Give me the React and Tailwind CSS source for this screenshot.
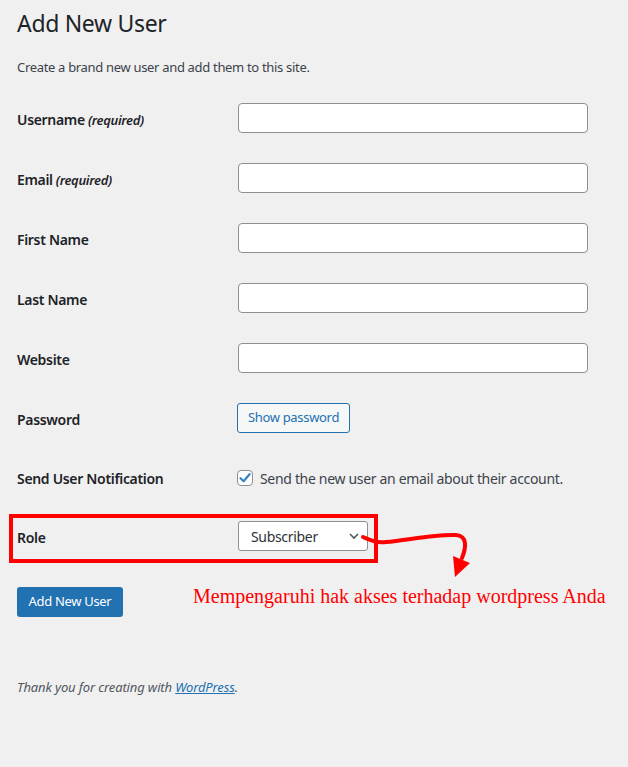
import React from "react";

const font = { fontFamily: '"Noto Sans", "Open Sans", sans-serif' };

function Row({ label, req, children, relative, extra, h = "h-[60px]" }) {
  return (
    <div className={`flex ${h} items-center ${relative ? "relative" : ""}`}>
      <div className="w-[221px] shrink-0 pt-[3px] text-[14px] font-semibold text-[#1d2327]">
        {label}
        {req && <span className="text-[13px] italic font-semibold"> (required)</span>}
      </div>
      <div className="flex items-center">{children}</div>
      {extra}
    </div>
  );
}

function Input() {
  return <div className="h-[30px] w-[350px] rounded-[4px] border border-[#8c8f94] bg-white" />;
}

export default function App() {
  return (
    <div className="min-h-[767px] w-[628px] bg-[#f0f0f1] pl-[17px] tracking-[-0.02em]" style={font}>
      <h1 className="pt-[8px] text-[23px] leading-[30px] font-normal text-[#1d2327]">Add New User</h1>
      <p className="mt-[19px] text-[13px] leading-[20px] text-[#3c434a]">
        Create a brand new user and add them to this site.
      </p>
      <div className="mt-[11px]">
        <Row label="Username" req><Input /></Row>
        <Row label="Email" req><Input /></Row>
        <Row label="First Name"><Input /></Row>
        <Row label="Last Name"><Input /></Row>
        <Row label="Website"><Input /></Row>
        <Row label="Password">
          <button className="-ml-[1px] h-[30px] w-[113px] rounded-[3px] border border-[#2271b1] bg-[#f6f7f7] text-[13px] text-[#2271b1]">
            Show password
          </button>
        </Row>
        <Row label="Send User Notification" h="h-[58px]">
          <div className="-ml-[1px] flex items-center pt-[2px]">
            <span className="flex h-[16px] w-[16px] items-center justify-center rounded-[4px] border border-[#8c8f94] bg-white">
              <svg width="14" height="14" viewBox="0 0 14 14">
                <path d="M2.5 7.2 L5.6 10.2 L11.6 3.2" fill="none" stroke="#3582c4" strokeWidth="2.2" strokeLinecap="round" strokeLinejoin="round" />
              </svg>
            </span>
            <span className="ml-[7px] text-[14px] text-[#3c434a]">Send the new user an email about their account.</span>
          </div>
        </Row>
        <Row
          label="Role"
          relative
          extra={
            <>
              <div className="pointer-events-none absolute left-[-8px] top-[8px] h-[49px] w-[369px] border-[4px] border-[#ff0000]" />
              <svg className="pointer-events-none absolute left-[329px] top-[20px]" width="150" height="65" viewBox="0 0 150 65">
                <path
                  d="M17 11 C 24 14, 30 17, 40 16 C 62 14, 90 8, 110 9 C 122 10, 120 22, 116 32"
                  fill="none"
                  stroke="#ff0000"
                  strokeWidth="4"
                  strokeLinecap="round"
                />
                <polygon points="107,30 124,37 109,51" fill="#ff0000" />
              </svg>
            </>
          }
        >
          <div className="flex h-[30px] w-[130px] items-center justify-between rounded-[3px] border border-[#8c8f94] bg-white pl-[12px] pr-[6px]">
            <span className="text-[14px] text-[#2c3338]">Subscriber</span>
            <svg width="14" height="14" viewBox="0 0 14 14">
              <path d="M3 5 L7 9 L11 5" fill="none" stroke="#50575e" strokeWidth="1.6" />
            </svg>
          </div>
        </Row>
      </div>
      <div className="mt-[21px] flex h-[30px] items-start">
        <button className="h-[30px] w-[106px] rounded-[3px] bg-[#2271b1] text-[13px] text-white">Add New User</button>
        <span
          className="-mt-[2px] ml-[70px] text-[20px] leading-[23px] tracking-normal text-[#ff0000]"
          style={{ fontFamily: '"Liberation Serif", serif' }}
        >
          Mempengaruhi hak akses terhadap wordpress Anda
        </span>
      </div>
      <p className="mt-[61px] text-[13px] leading-[18px] italic tracking-[-0.01em] text-[#50575e]">
        Thank you for creating with{" "}
        <a className="text-[#2271b1] underline" href="#">WordPress</a>.
      </p>
    </div>
  );
}
